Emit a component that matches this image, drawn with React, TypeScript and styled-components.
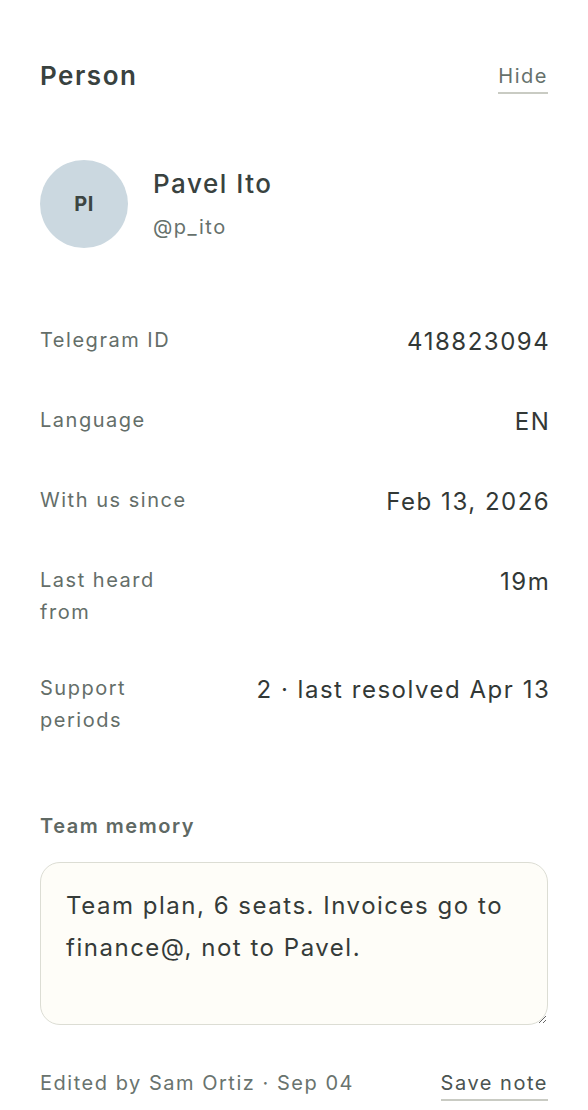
import React, { useState } from 'react';
import styled, { createGlobalStyle } from 'styled-components';

const GlobalStyle = createGlobalStyle`
  html, body {
    margin: 0;
    padding: 0;
    background: #ffffff;
  }
  body {
    font-family: Inter, "Noto Sans", "Liberation Sans", sans-serif;
    letter-spacing: 0.095em;
    -webkit-font-smoothing: antialiased;
  }
  button, textarea {
    letter-spacing: inherit;
  }
`;

const Panel = styled.aside`
  box-sizing: border-box;
  width: 588px;
  padding: 56px 40px 0 40px;
  display: flex;
  flex-direction: column;
`;

const Header = styled.header`
  display: flex;
  justify-content: space-between;
  align-items: center;
  height: 40px;
`;

const Title = styled.h2`
  margin: 0;
  font-size: 26px;
  line-height: 40px;
  font-weight: 600;
  color: #39423f;
`;

const LinkButton = styled.button<{ $dark?: boolean }>`
  background: none;
  border: none;
  border-bottom: 2px solid #c9cbc3;
  padding: 0 0 4px 0;
  margin-top: 6px;
  font-family: inherit;
  font-size: 20px;
  line-height: 24px;
  color: ${(p) => (p.$dark ? '#4b5451' : '#66716c')};
  cursor: pointer;
`;

const Identity = styled.section`
  display: flex;
  align-items: center;
  gap: 25px;
  margin-top: 64px;
`;

const Avatar = styled.div`
  width: 88px;
  height: 88px;
  border-radius: 50%;
  background: #cbd8e0;
  display: flex;
  align-items: center;
  justify-content: center;
  font-size: 20px;
  font-weight: 700;
  letter-spacing: 0.02em;
  color: #3c4542;
  flex-shrink: 0;
`;

const NameBlock = styled.div`
  display: flex;
  flex-direction: column;
  gap: 12px;
`;

const Name = styled.div`
  font-size: 26px;
  line-height: 34px;
  font-weight: 500;
  color: #39423f;
`;

const Handle = styled.div`
  font-size: 20px;
  line-height: 28px;
  color: #66716c;
`;

const Details = styled.dl`
  margin: 76px 0 0 0;
  display: flex;
  flex-direction: column;
  gap: 44px;
`;

const Row = styled.div`
  display: flex;
  justify-content: space-between;
  align-items: flex-start;
  gap: 16px;
`;

const Label = styled.dt`
  width: 160px;
  flex-shrink: 0;
  font-size: 20px;
  line-height: 32px;
  color: #646e69;
`;

const Value = styled.dd`
  margin: 0 -0.095em 0 0;
  text-align: right;
  font-size: 24px;
  line-height: 36px;
  color: #323836;
`;

const MemoryLabel = styled.label`
  margin-top: 76px;
  font-size: 20px;
  line-height: 28px;
  font-weight: 600;
  color: #5f6964;
`;

const Note = styled.textarea`
  box-sizing: border-box;
  margin-top: 22px;
  width: 100%;
  height: 163px;
  padding: 22px 25px;
  border: 1.5px solid #dcddd4;
  border-radius: 20px;
  background: #fefdf8;
  font-family: inherit;
  font-size: 24px;
  line-height: 42px;
  color: #353b39;
  resize: vertical;
  outline: none;
`;

const Footer = styled.footer`
  margin-top: 40px;
  display: flex;
  justify-content: space-between;
  align-items: center;
`;

const Meta = styled.span`
  font-size: 20px;
  line-height: 28px;
  color: #69736e;
`;

const details: [string, string][] = [
  ['Telegram ID', '418823094'],
  ['Language', 'EN'],
  ['With us since', 'Feb 13, 2026'],
  ['Last heard from', '19m'],
  ['Support periods', '2 · last resolved Apr 13'],
];

export default function App() {
  const [note, setNote] = useState('Team plan, 6 seats. Invoices go to finance@, not to Pavel.');

  return (
    <>
      <GlobalStyle />
      <Panel>
        <Header>
          <Title>Person</Title>
          <LinkButton>Hide</LinkButton>
        </Header>

        <Identity>
          <Avatar>PI</Avatar>
          <NameBlock>
            <Name>Pavel Ito</Name>
            <Handle>@p_ito</Handle>
          </NameBlock>
        </Identity>

        <Details>
          {details.map(([label, value]) => (
            <Row key={label}>
              <Label>{label}</Label>
              <Value>{value}</Value>
            </Row>
          ))}
        </Details>

        <MemoryLabel htmlFor="memory">Team memory</MemoryLabel>
        <Note id="memory" value={note} onChange={(e) => setNote(e.target.value)} />

        <Footer>
          <Meta>Edited by Sam Ortiz · Sep 04</Meta>
          <LinkButton $dark>Save note</LinkButton>
        </Footer>
      </Panel>
    </>
  );
}
